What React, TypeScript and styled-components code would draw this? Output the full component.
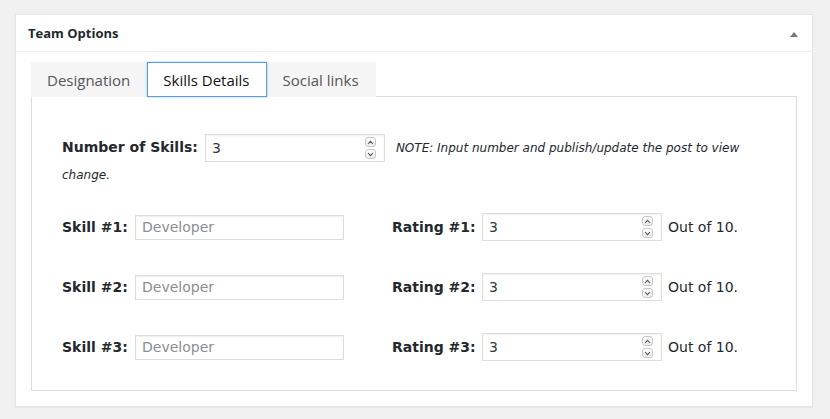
import styled, { createGlobalStyle } from 'styled-components';

// global
const GlobalStyle = createGlobalStyle`
  html, body {
    margin: 0;
    padding: 0;
    background: #f1f1f1;
  }
  * {
    box-sizing: border-box;
  }
`;

// CSS
const StyledPage = styled.div`
  padding: 14px 17px 0 15px;
  width: 830px;
  height: 419px;
`;

const StyledPanel = styled.div`
  background: #fff;
  border: 1px solid #e5e5e5;
  box-shadow: 0 1px 1px rgba(0, 0, 0, 0.04);
`;

const StyledPanelHeader = styled.div`
  height: 37px;
  display: flex;
  align-items: center;
  justify-content: space-between;
  padding: 0 14px 0 12px;
  border-bottom: 1px solid #eee;
`;

const StyledPanelTitle = styled.h2`
  margin: 0;
  font-family: 'Open Sans', sans-serif;
  font-size: 13px;
  font-weight: 700;
  color: #23282d;
`;

const StyledToggle = styled.span`
  width: 0;
  height: 0;
  margin-top: 2px;
  border-left: 4px solid transparent;
  border-right: 4px solid transparent;
  border-bottom: 5px solid #72777c;
`;

const StyledPanelBody = styled.div`
  padding: 10px 15px 15px 15px;
`;

const StyledTabList = styled.div`
  display: flex;
  align-items: flex-end;
`;

const StyledTab = styled.div<{ $active?: boolean }>`
  height: 35px;
  padding: 0 16px 0 15px;
  display: flex;
  align-items: center;
  font-family: 'Open Sans', sans-serif;
  font-size: 15px;
  color: ${(p) => (p.$active ? '#111' : '#555')};
  background: ${(p) => (p.$active ? '#fff' : '#f5f5f5')};
  border: 1px solid ${(p) => (p.$active ? '#5b9dd9' : '#f5f5f5')};
  box-shadow: ${(p) => (p.$active ? '0 0 2px rgba(30, 140, 190, 0.5)' : 'none')};
  margin-bottom: -1px;
  position: relative;
  z-index: ${(p) => (p.$active ? 1 : 0)};
`;

const StyledTabPanel = styled.div`
  border: 1px solid #ddd;
  padding: 37px 30px 28px 30px;
  font-family: 'DejaVu Sans', Verdana, sans-serif;
  color: #23282d;
`;

const StyledNoteRow = styled.div`
  font-size: 14px;
  line-height: 25px;
  margin-bottom: 24px;
`;

const StyledLabel = styled.span<{ $width?: number }>`
  display: inline-block;
  font-weight: bold;
  font-size: 14px;
  width: ${(p) => (p.$width ? `${p.$width}px` : 'auto')};
  margin-right: ${(p) => (p.$width ? 0 : 7)}px;
  flex-shrink: 0;
`;

const StyledNote = styled.em`
  font-size: 12px;
  margin-left: 11px;
`;

const StyledNumberField = styled.span<{ $width: number; $height: number }>`
  display: inline-flex;
  align-items: center;
  vertical-align: middle;
  width: ${(p) => p.$width}px;
  height: ${(p) => p.$height}px;
  border: 1px solid #ddd;
  box-shadow: inset 0 1px 2px rgba(0, 0, 0, 0.07);
  background: #fff;
  padding: 0 8px 0 6px;
`;

const StyledValue = styled.input`
  flex: 1;
  min-width: 0;
  border: none;
  outline: none;
  padding: 0;
  background: transparent;
  font-family: 'DejaVu Sans', Verdana, sans-serif;
  font-size: 14px;
  color: #32373c;
`;

const StyledSpinner = styled.span`
  display: flex;
  flex-direction: column;
  gap: 2px;
`;

const StyledSpinButton = styled.span`
  width: 11px;
  height: 10px;
  border: 1px solid #c8c8c8;
  border-radius: 3px;
  background: linear-gradient(#fdfdfd, #ececec);
  display: flex;
  align-items: center;
  justify-content: center;
`;

const StyledTextField = styled.input`
  width: 209px;
  height: 25px;
  border: 1px solid #ddd;
  box-shadow: inset 0 1px 2px rgba(0, 0, 0, 0.07);
  padding: 0 6px;
  font-family: 'DejaVu Sans', Verdana, sans-serif;
  font-size: 14px;
  color: #32373c;
  outline: none;

  &::placeholder {
    color: #8a8e92;
  }
`;

const StyledSkillList = styled.div`
  display: flex;
  flex-direction: column;
  gap: 30px;
`;

const StyledSkillRow = styled.div`
  display: flex;
  align-items: center;
  height: 30px;
`;

const StyledGroup = styled.div<{ $width?: number }>`
  display: flex;
  align-items: center;
  width: ${(p) => (p.$width ? `${p.$width}px` : 'auto')};
`;

const StyledSuffix = styled.span`
  font-size: 14px;
  margin-left: 6px;
`;

const Chevron = ({ up }: { up?: boolean }) => (
  <svg width="7" height="5" viewBox="0 0 7 5">
    <path
      d={up ? 'M1 4 L3.5 1.3 L6 4' : 'M1 1 L3.5 3.7 L6 1'}
      fill="none"
      stroke="#555"
      strokeWidth="1.1"
    />
  </svg>
);

const NumberField = ({ value, width, height }: { value: string; width: number; height: number }) => (
  <StyledNumberField $width={width} $height={height}>
    <StyledValue defaultValue={value} readOnly />
    <StyledSpinner>
      <StyledSpinButton><Chevron up /></StyledSpinButton>
      <StyledSpinButton><Chevron /></StyledSpinButton>
    </StyledSpinner>
  </StyledNumberField>
);

const tabs = ['Designation', 'Skills Details', 'Social links'];
const skills = [1, 2, 3];

const App = () => {
  return (
    <StyledPage>
      <GlobalStyle />
      <StyledPanel>
        <StyledPanelHeader>
          <StyledPanelTitle>Team Options</StyledPanelTitle>
          <StyledToggle />
        </StyledPanelHeader>
        <StyledPanelBody>
          <StyledTabList>
            {tabs.map((tab) => (
              <StyledTab key={tab} $active={tab === 'Skills Details'}>
                {tab}
              </StyledTab>
            ))}
          </StyledTabList>
          <StyledTabPanel>
            <StyledNoteRow>
              <StyledLabel>Number of Skills:</StyledLabel>
              <NumberField value="3" width={180} height={28} />
              <StyledNote>NOTE: Input number and publish/update the post to view change.</StyledNote>
            </StyledNoteRow>
            <StyledSkillList>
              {skills.map((n) => (
                <StyledSkillRow key={n}>
                  <StyledGroup $width={330}>
                    <StyledLabel $width={73}>Skill #{n}:</StyledLabel>
                    <StyledTextField placeholder="Developer" />
                  </StyledGroup>
                  <StyledGroup>
                    <StyledLabel $width={90}>Rating #{n}:</StyledLabel>
                    <NumberField value="3" width={180} height={28} />
                    <StyledSuffix>Out of 10.</StyledSuffix>
                  </StyledGroup>
                </StyledSkillRow>
              ))}
            </StyledSkillList>
          </StyledTabPanel>
        </StyledPanelBody>
      </StyledPanel>
    </StyledPage>
  );
};

export default App;
